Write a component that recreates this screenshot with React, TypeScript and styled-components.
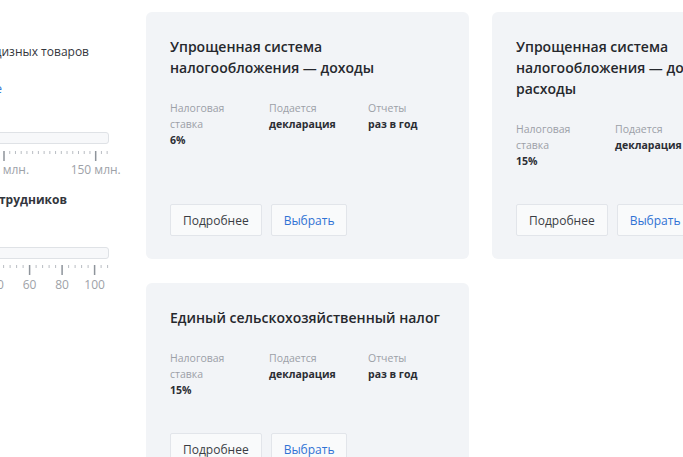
import React from "react";
import styled, { createGlobalStyle } from "styled-components";

const GlobalStyle = createGlobalStyle`
  html, body { margin: 0; padding: 0; background: #ffffff; overflow: hidden; }
  body { font-family: "Open Sans", "Noto Sans", sans-serif; color: #2b2d33; }
  * { box-sizing: border-box; }
`;

const Page = styled.div`
  display: flex;
  align-items: flex-start;
  padding-top: 12px;
  width: 683px;
  height: 457px;
  overflow: hidden;
`;

const Sidebar = styled.aside`
  flex: 0 0 240px;
  width: 240px;
  min-width: 0;
  margin-left: -131px;
  padding-top: 30px;
  display: flex;
  flex-direction: column;
`;

const SideText = styled.div<{ $inset: number; $mt?: number; $bold?: boolean; $link?: boolean }>`
  white-space: nowrap;
  display: flex;
  justify-content: flex-end;
  width: 240px;
  padding-right: ${(p) => p.$inset}px;
  margin-top: ${(p) => p.$mt ?? 0}px;
  font-size: 12px;
  line-height: 20px;
  font-weight: ${(p) => (p.$bold ? 700 : 400)};
  color: ${(p) => (p.$link ? "#2f78d6" : "#33363c")};
`;

const Track = styled.div<{ $mt: number }>`
  margin-top: ${(p) => p.$mt}px;
  width: 240px;
  height: 12px;
  background: #f7f8fa;
  border: 1px solid #dfe2e6;
  border-radius: 3px;
`;

const Scale = styled.svg<{ $mt: number }>`
  display: block;
  margin-top: ${(p) => p.$mt}px;
  overflow: visible;
`;

const ScaleLabels = styled.div<{ $mt: number }>`
  position: relative;
  width: 240px;
  height: 16px;
  margin-top: ${(p) => p.$mt}px;
`;

const ScaleLabel = styled.span`
  position: absolute;
  top: 0;
  transform: translateX(-50%);
  white-space: nowrap;
  font-size: 12px;
  line-height: 16px;
  color: #9ea2a8;
`;

const Cards = styled.main`
  flex: 0 0 auto;
  margin-left: 37px;
  display: grid;
  grid-template-columns: repeat(2, 323px);
  gap: 24px 23px;
`;

const Card = styled.section`
  background: #f2f4f7;
  border-radius: 6px;
  padding: 24px 24px 23px;
  display: flex;
  flex-direction: column;
`;

const Title = styled.h3`
  margin: 0 0 22px;
  font-size: 14px;
  line-height: 21px;
  font-weight: 600;
  color: #26282d;
`;

const Info = styled.div`
  display: grid;
  grid-template-columns: repeat(3, 90px);
  column-gap: 9px;
  margin-bottom: 35px;
`;

const InfoLabel = styled.div`
  font-size: 10.5px;
  line-height: 16px;
  color: #9ca0a7;
`;

const InfoValue = styled.div`
  font-size: 10.5px;
  line-height: 16px;
  font-weight: 700;
  color: #2b2d33;
`;

const Actions = styled.div`
  margin-top: auto;
  display: flex;
  gap: 9px;
`;

const Button = styled.button<{ $primary?: boolean }>`
  height: 32px;
  padding: 0 12px;
  border: 1px solid #e2e5ea;
  border-radius: 2px;
  background: #f9fafb;
  font-family: "Open Sans", "Noto Sans", sans-serif;
  font-size: 12px;
  color: ${(p) => (p.$primary ? "#2f72d4" : "#3a3d44")};
  cursor: pointer;
`;

// page coordinates: sidebar spans x = -131 .. 109
const VB_X = -131;

function ticks(start: number, step: number, count: number, majorEvery: number, majorOffset: number) {
  const out: { x: number; major: boolean }[] = [];
  for (let i = 0; i < count; i++) {
    out.push({ x: start + i * step, major: (i - majorOffset) % majorEvery === 0 });
  }
  return out;
}

const ScaleDrawing: React.FC<{ marks: { x: number; major: boolean }[]; mt: number }> = ({ marks, mt }) => (
  <Scale $mt={mt} width={240} height={10} viewBox={`${VB_X} 0 240 10`}>
    {marks.map((m, i) =>
      m.major ? (
        <rect key={i} x={m.x - 0.75} y={0} width={1.5} height={10} fill="#8e949b" />
      ) : (
        <rect key={i} x={m.x - 0.5} y={0} width={1} height={3} fill="#b9bdc3" />
      )
    )}
  </Scale>
);

const incomeMarks = ticks(4 - 5.73 * 20, 5.73, 42, 16, 4).filter((m) => m.x > -131 && m.x < 109);
const staffMarks = ticks(-2.9 - 6.5 * 15, 6.5, 33, 5, 0).filter((m) => m.x > -131 && m.x < 109);

type Regime = {
  title: string;
  rate: string;
};

const regimes: Regime[] = [
  { title: "Упрощенная система налогообложения — доходы", rate: "6%" },
  { title: "Упрощенная система налогообложения — доходы минус расходы", rate: "15%" },
  { title: "Единый сельскохозяйственный налог", rate: "15%" },
];

const RegimeCard: React.FC<{ r: Regime }> = ({ r }) => (
  <Card>
    <Title>{r.title}</Title>
    <Info>
      <div>
        <InfoLabel>Налоговая ставка</InfoLabel>
        <InfoValue>{r.rate}</InfoValue>
      </div>
      <div>
        <InfoLabel>Подается</InfoLabel>
        <InfoValue>декларация</InfoValue>
      </div>
      <div>
        <InfoLabel>Отчеты</InfoLabel>
        <InfoValue>раз в год</InfoValue>
      </div>
    </Info>
    <Actions>
      <Button>Подробнее</Button>
      <Button $primary>Выбрать</Button>
    </Actions>
  </Card>
);

const px = (x: number) => `${x - VB_X}px`;

export default function App() {
  return (
    <>
      <GlobalStyle />
      <Page>
        <Sidebar>
          <SideText $inset={20}>Производство подакцизных товаров</SideText>
          <SideText $inset={107} $mt={17} $link>
            Подробнее
          </SideText>
          <Track $mt={33} />
          <ScaleDrawing marks={incomeMarks} mt={7} />
          <ScaleLabels $mt={1}>
            <ScaleLabel style={{ left: px(4) }}>100 млн.</ScaleLabel>
            <ScaleLabel style={{ left: px(95.7) }}>150 млн.</ScaleLabel>
          </ScaleLabels>
          <SideText $inset={42} $mt={12} $bold>
            Количество сотрудников
          </SideText>
          <Track $mt={37} />
          <ScaleDrawing marks={staffMarks} mt={6} />
          <ScaleLabels $mt={2}>
            <ScaleLabel style={{ left: px(-2.9) }}>40</ScaleLabel>
            <ScaleLabel style={{ left: px(29.6) }}>60</ScaleLabel>
            <ScaleLabel style={{ left: px(62.1) }}>80</ScaleLabel>
            <ScaleLabel style={{ left: px(94.6) }}>100</ScaleLabel>
          </ScaleLabels>
        </Sidebar>
        <Cards>
          {regimes.map((r, i) => (
            <RegimeCard key={i} r={r} />
          ))}
        </Cards>
      </Page>
    </>
  );
}
